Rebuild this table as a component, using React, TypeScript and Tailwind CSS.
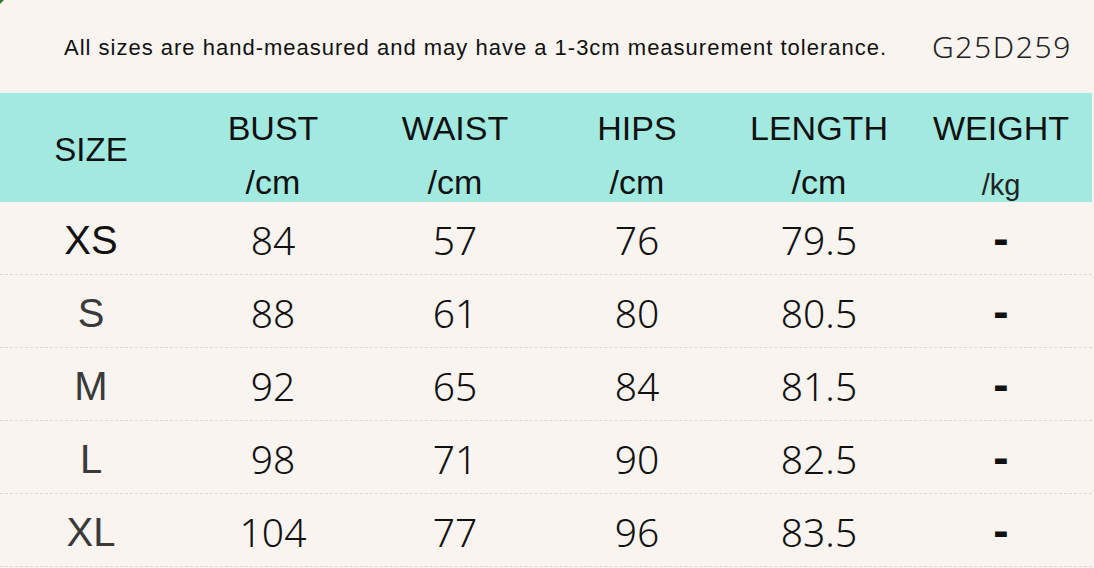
const headers = [
  { title: 'BUST', unit: '/cm' },
  { title: 'WAIST', unit: '/cm' },
  { title: 'HIPS', unit: '/cm' },
  { title: 'LENGTH', unit: '/cm' },
  { title: 'WEIGHT', unit: '/kg' },
]

const rows = [
  ['XS', '84', '57', '76', '79.5', '-'],
  ['S', '88', '61', '80', '80.5', '-'],
  ['M', '92', '65', '84', '81.5', '-'],
  ['L', '98', '71', '90', '82.5', '-'],
  ['XL', '104', '77', '96', '83.5', '-'],
]

const arial = "font-['Liberation_Sans',Arial,sans-serif]"
const light = "font-['Noto_Sans','Open_Sans',sans-serif] font-light"

export default function App() {
  return (
    <div className="w-[1094px] h-[568px] overflow-hidden bg-[#f9f4f0] text-[#111]">
      <div className="relative flex items-center h-[93px] pl-[64px]">
        <div className="absolute left-0 top-0 w-0 h-0 border-t-[4px] border-r-[4px] border-t-[#2e7d32] border-r-transparent" />
        <div className={`${arial} text-[22px] tracking-[1px] w-[868px] pt-[2px] whitespace-nowrap`}>
          All sizes are hand-measured and may have a 1-3cm measurement tolerance.
        </div>
        <div className={`${light} text-[30px] tracking-[1.6px] text-[#222]`}>
          G25D259
        </div>
      </div>

      <div className={`${arial} grid grid-cols-6 w-[1092px] h-[109px] bg-[#a2e9e0]`}>
        <div className="flex items-center justify-center text-[33px] pt-[4px]">SIZE</div>
        {headers.map((h) => (
          <div key={h.title} className="flex flex-col items-center pt-[18px]">
            <div className="text-[34px] leading-[34px]">{h.title}</div>
            <div
              className={
                h.unit === '/kg'
                  ? 'text-[29px] leading-[30px] mt-[25px] text-[#222]'
                  : 'text-[34px] leading-[34px] mt-[20px]'
              }
            >
              {h.unit}
            </div>
          </div>
        ))}
      </div>

      <div className="w-[1092px]">
        {rows.map((r, i) => (
          <div
            key={r[0]}
            className="grid grid-cols-6 h-[73px] border-b border-dashed border-[#dcd9d5]"
          >
            <div
              className={`${arial} flex items-center justify-center text-[40px] pt-[4px] ${
                i === 0 ? 'text-[#111]' : 'text-[#3a3a3a]'
              }`}
            >
              {r[0]}
            </div>
            {r.slice(1).map((v, j) => (
              <div
                key={j}
                className={
                  v === '-'
                    ? `${arial} flex items-center justify-center text-[46px] font-bold pt-[1px]`
                    : `${light} flex items-center justify-center text-[39px] pt-[4px]`
                }
              >
                {v}
              </div>
            ))}
          </div>
        ))}
      </div>
    </div>
  )
}
